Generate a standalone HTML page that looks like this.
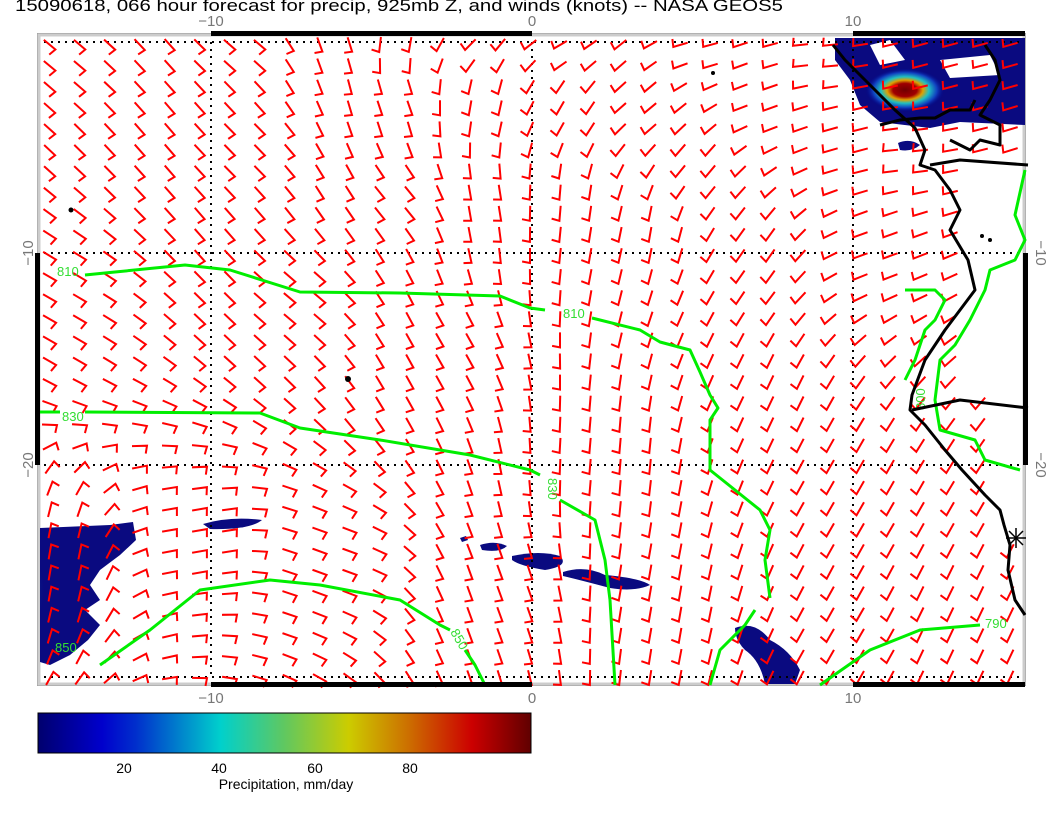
<!DOCTYPE html>
<html><head><meta charset="utf-8"><style>
html,body{margin:0;padding:0;background:#fff;width:1056px;height:816px;overflow:hidden}
svg{display:block}
text{font-family:"Liberation Sans",sans-serif}
</style></head><body>
<svg id="s" width="1056" height="816" viewBox="0 0 1056 816" xmlns="http://www.w3.org/2000/svg">
<defs>
<linearGradient id="cb" x1="0" x2="1" y1="0" y2="0">
<stop offset="0" stop-color="#00006e"/>
<stop offset="0.13" stop-color="#0000cc"/>
<stop offset="0.2" stop-color="#0030cc"/>
<stop offset="0.37" stop-color="#00d0cc"/>
<stop offset="0.5" stop-color="#60c860"/>
<stop offset="0.63" stop-color="#cccc00"/>
<stop offset="0.75" stop-color="#cc7000"/>
<stop offset="0.88" stop-color="#cc0000"/>
<stop offset="1" stop-color="#600000"/>
</linearGradient>
<radialGradient id="hot" cx="0.5" cy="0.5" r="0.5">
<stop offset="0" stop-color="#700000"/><stop offset="0.3" stop-color="#a00000"/>
<stop offset="0.45" stop-color="#e0a000"/><stop offset="0.6" stop-color="#20c0c0"/>
<stop offset="0.8" stop-color="#1040c0"/><stop offset="1" stop-color="#000080" stop-opacity="0"/>
</radialGradient>
<radialGradient id="cyan" cx="0" cy="0.5" r="0.6">
<stop offset="0" stop-color="#a0e040"/><stop offset="0.3" stop-color="#20b0c0"/><stop offset="1" stop-color="#000080" stop-opacity="0"/>
</radialGradient>
<clipPath id="fr"><rect x="40" y="36" width="985" height="648"/></clipPath>
</defs>
<text x="15" y="11" font-size="17" fill="#000" textLength="768" lengthAdjust="spacingAndGlyphs">15090618, 066 hour forecast for precip, 925mb Z, and winds (knots) -- NASA GEOS5</text>
<rect x="37.5" y="33.5" width="988" height="652" fill="#fff" stroke="#999" stroke-width="1"/>
<rect x="39" y="35" width="985" height="649" fill="none" stroke="#ccc" stroke-width="3"/>
<g clip-path="url(#fr)">
<g fill="#0a0a80">
<path d="M40,528 L110,525 L133,522 L136,540 L120,555 L100,570 L90,585 L100,600 L85,610 L100,625 L88,640 L70,655 L50,665 L40,662 Z"/>
<path d="M835,38 L1025,38 L1025,125 L960,122 L930,128 L880,122 L860,105 L850,80 L835,60 Z"/>
<path d="M203,524 Q230,516 262,520 Q250,530 210,529 Z"/>
<path d="M480,545 Q495,540 507,546 Q500,553 482,550 Z"/>
<path d="M512,556 Q540,550 560,556 Q570,566 545,570 Q520,566 512,560 Z"/>
<path d="M563,572 Q585,565 605,575 Q640,578 650,585 Q635,592 610,588 Q580,580 563,576 Z"/>
<path d="M735,628 Q755,620 770,640 Q790,650 800,670 L795,684 L765,684 Q760,660 745,650 Q735,640 735,628 Z"/>
<path d="M898,143 Q910,138 920,145 Q912,152 900,150 Z"/>
<path d="M460,538 l6,-2 l2,4 l-6,2z"/>
</g>
<ellipse cx="40" cy="590" rx="30" ry="45" fill="url(#cyan)"/>
<ellipse cx="905" cy="90" rx="40" ry="22" fill="url(#hot)"/>
<g fill="#fff">
<path d="M870,45 L890,40 L905,60 L880,65 Z"/><path d="M940,60 L990,55 L1000,75 L950,78 Z"/>
</g>
</g>
<g stroke="#000" stroke-width="2" stroke-dasharray="2,5" fill="none">
<line x1="211" y1="42" x2="211" y2="678"/><line x1="532" y1="42" x2="532" y2="678"/><line x1="853" y1="42" x2="853" y2="678"/>
<line x1="44" y1="253" x2="1020" y2="253"/><line x1="44" y1="465" x2="1020" y2="465"/>
<line x1="44" y1="42" x2="1020" y2="42"/><line x1="44" y1="677" x2="1020" y2="677"/>
</g>
<g id="barbs" stroke="#f00" stroke-width="2" fill="none" stroke-linecap="square"></g>
<g stroke="#00ee00" stroke-width="3" fill="none" stroke-linejoin="round">
<polyline points="85,275 115,272 185,265 230,270 300,292 400,293 500,296 530,308 545,310"/>
<polyline points="592,318 640,330 660,342 690,350 700,372 710,395 718,408 710,420 710,470 735,490 760,510 770,530 765,560 770,598"/>
<polyline points="755,610 745,625 720,650 710,685"/>
<polyline points="40,412 60,412"/><polyline points="85,412 260,413 300,428 380,440 470,455 530,470 540,475"/>
<polyline points="560,500 595,520 605,560 610,600 615,685"/>
<polyline points="100,665 150,630 175,610 200,590 270,580 320,585 400,600 440,625 450,630"/>
<polyline points="465,650 475,665 485,685"/>
<polyline points="820,685 870,650 920,630 980,625"/>
<polyline points="1025,170 1015,215 1025,240 1015,260 990,270 985,290 970,320 955,345 940,360 935,400 940,430 975,440 985,460 1020,470"/>
<polyline points="905,290 935,290 945,300 935,320 925,330 915,360 905,380"/>
</g>
<g fill="#3d3" font-size="13">
<text x="57" y="276">810</text><text x="563" y="318">810</text><text x="62" y="421">830</text>
<text x="548" y="478" transform="rotate(90 548 478)">830</text>
<text x="450" y="632" transform="rotate(60 450 632)">850</text>
<text x="985" y="628">790</text><text x="55" y="652">850</text>
<text x="925" y="410" transform="rotate(-90 925 410)">800</text>
</g>
<g stroke="#000" stroke-width="3" fill="none" stroke-linejoin="round">
<polyline points="833,45 845,60 860,75 880,95 895,110 915,128 925,150 920,165 935,170 950,190 960,210 950,230 968,260 975,290 960,310 945,330 925,360 912,395 910,410 925,425 945,450 962,470 985,495 1000,510 1004,525 1010,545 1008,570 1015,600 1025,615"/>
<polyline points="930,165 960,160 1028,165"/>
<polyline points="912,410 960,400 1028,408"/>
<polyline points="950,140 970,150 980,140 1000,145 1000,125 980,115 990,100 1000,80 995,60 985,45"/>
<polyline points="880,125 900,120 920,118 935,118 950,110 970,110 975,100"/>
</g>
<g fill="#000"><circle cx="71" cy="210" r="2.5"/><circle cx="348" cy="379" r="3"/><circle cx="713" cy="73" r="2"/>
<circle cx="990" cy="240" r="2"/><circle cx="982" cy="236" r="2"/></g>
<g stroke="#000" stroke-width="1.5"><line x1="1006" y1="538" x2="1026" y2="538"/><line x1="1016" y1="528" x2="1016" y2="548"/><line x1="1009" y1="531" x2="1023" y2="545"/><line x1="1023" y1="531" x2="1009" y2="545"/></g>
<g fill="#000">
<rect x="211" y="31" width="321" height="5"/><rect x="853" y="31" width="172" height="5"/>
<rect x="211" y="682" width="321" height="5"/><rect x="853" y="682" width="172" height="5"/>
<rect x="35" y="253" width="5" height="212"/><rect x="1023" y="253" width="5" height="212"/>
</g>
<g fill="#777" font-size="15" text-anchor="middle">
<text x="211" y="26">−10</text><text x="532" y="26">0</text><text x="853" y="26">10</text>
<text x="211" y="703">−10</text><text x="532" y="703">0</text><text x="853" y="703">10</text>
<text transform="translate(33,253) rotate(-90)">−10</text><text transform="translate(33,465) rotate(-90)">−20</text>
<text transform="translate(1036,253) rotate(90)">−10</text><text transform="translate(1036,465) rotate(90)">−20</text>
</g>
<rect x="38" y="713" width="493" height="40" fill="url(#cb)" stroke="#000" stroke-width="1"/>
<g font-size="14" fill="#000" text-anchor="middle">
<text x="124" y="773">20</text><text x="219" y="773">40</text><text x="315" y="773">60</text><text x="410" y="773">80</text>
<text x="286" y="789">Precipitation, mm/day</text>
</g>
</svg>
<script>
var A=[[50,45,40],[250,45,40],[330,45,70],[400,45,100],[470,45,135],[560,45,150],[700,45,165],[820,60,175],[950,45,165],
[400,100,70],[480,100,100],[560,110,120],[640,110,140],[760,110,160],
[250,150,45],[400,200,50],[490,200,80],[560,200,95],[700,170,130],[850,150,165],
[50,300,30],[300,300,40],[450,350,60],[650,230,100],[760,250,125],[870,250,160],
[620,450,95],[760,400,115],
[50,560,-80],[200,540,-10],[330,560,20],[500,600,70],[650,600,100],[850,500,120],[950,650,115],[850,650,120],[900,150,175]];
function coast(y){if(y<160)return 835+y*0.5;if(y<400)return 930;return 960+(y-400)*0.2;}
var g=document.getElementById('barbs'),h='';
for(var y=45;y<680;y+=21.1){for(var x=50;x<1022;x+=30){
 if(x>coast(y)+20&&y>170)continue;
 var sx=0,sy=0;for(var i=0;i<A.length;i++){var dx=x-A[i][0],dy=y-A[i][1],w=1/Math.pow(dx*dx+dy*dy+100,1.5);var a=A[i][2]*Math.PI/180;sx+=w*Math.cos(a);sy+=w*Math.sin(a);}
 var a=Math.atan2(sy,sx),L=14;
 var x1=x-L/2*Math.cos(a),y1=y-L/2*Math.sin(a),x2=x+L/2*Math.cos(a),y2=y+L/2*Math.sin(a);
 var b=a+1.75,x3=x2+7*Math.cos(b),y3=y2+7*Math.sin(b);
 h+='<polyline points="'+x1.toFixed(1)+','+y1.toFixed(1)+' '+x2.toFixed(1)+','+y2.toFixed(1)+' '+x3.toFixed(1)+','+y3.toFixed(1)+'"/>';
}}
g.innerHTML=h;
</script>
</body></html>
